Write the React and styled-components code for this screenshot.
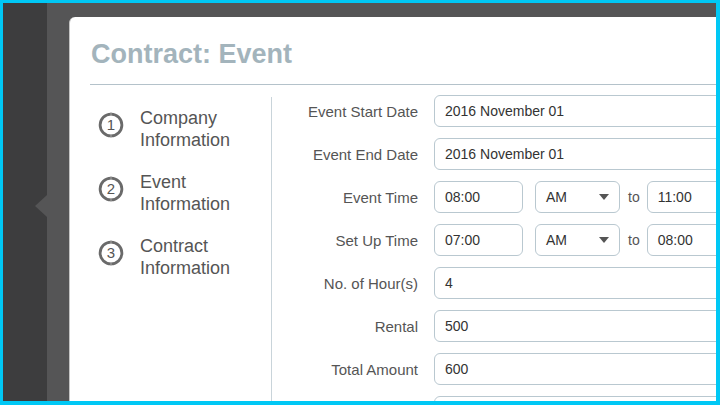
import styled, { createGlobalStyle } from "styled-components"

const GlobalStyle = createGlobalStyle`
    html, body {
        margin: 0;
        padding: 0;
        background: #00c8f5;
    }
    * { box-sizing: border-box; }
`

const steps = [
    { n: 1, lines: ["Company", "Information"] },
    { n: 2, lines: ["Event", "Information"] },
    { n: 3, lines: ["Contract", "Information"] },
]

function StepIcon({ n }){
    return(
        <svg width="26" height="26" viewBox="0 0 26 26">
            <circle cx="13" cy="13" r="10.9" fill="none" stroke="#6a6a6a" strokeWidth="2.8" />
            <line x1="13" y1="0.4" x2="13" y2="3" stroke="#9a9a9a" strokeWidth="1.2" />
            <line x1="13" y1="23" x2="13" y2="25.6" stroke="#9a9a9a" strokeWidth="1.2" />
            <text x="13" y="18.4" textAnchor="middle" fontSize="15" fontFamily="Liberation Sans, Arial, sans-serif" fill="#555">{n}</text>
        </svg>
    )
}

function Caret(){
    return(
        <svg width="10" height="6" viewBox="0 0 10 6">
            <path d="M0 0 L10 0 L5 6 Z" fill="#555" />
        </svg>
    )
}

function TimeRow({ label, from, to }){
    return(
        <Row>
            <Label>{label}</Label>
            <Field $width={89}>{from}</Field>
            <Select>AM<Caret /></Select>
            <To>to</To>
            <Field $width={120}>{to}</Field>
        </Row>
    )
}

function TextRow({ label, value }){
    return(
        <Row>
            <Label>{label}</Label>
            <Field $width={330}>{value}</Field>
        </Row>
    )
}

export default function App(){
    return(
        <Frame>
            <GlobalStyle />
            <Rail>
                <Pointer />
            </Rail>
            <Stage>
                <Card>
                    <Title>Contract: Event</Title>
                    <Divider />
                    <Body>
                        <Steps>
                            {steps.map(s => (
                                <Step key={s.n}>
                                    <StepIcon n={s.n} />
                                    <StepText>
                                        {s.lines.map(l => <div key={l}>{l}</div>)}
                                    </StepText>
                                </Step>
                            ))}
                        </Steps>
                        <Form>
                            <TextRow label="Event Start Date" value="2016 November 01" />
                            <TextRow label="Event End Date" value="2016 November 01" />
                            <TimeRow label="Event Time" from="08:00" to="11:00" />
                            <TimeRow label="Set Up Time" from="07:00" to="08:00" />
                            <TextRow label="No. of Hour(s)" value="4" />
                            <TextRow label="Rental" value="500" />
                            <TextRow label="Total Amount" value="600" />
                            <TextRow label="" value="" />
                        </Form>
                    </Body>
                </Card>
            </Stage>
        </Frame>
    )
}

const Frame = styled.div`
    width: 720px;
    height: 405px;
    border-style: solid;
    border-color: #00c8f5;
    border-width: 3px 4px 4px 3px;
    display: flex;
    overflow: hidden;
    font-family: "Liberation Sans", Arial, sans-serif;
`

const Rail = styled.div`
    width: 44px;
    flex-shrink: 0;
    background: #3d3d3e;
    position: relative;
`

const Pointer = styled.div`
    position: absolute;
    right: 0;
    top: 192px;
    width: 0;
    height: 0;
    border-top: 11px solid transparent;
    border-bottom: 11px solid transparent;
    border-right: 12px solid #555556;
`

const Stage = styled.div`
    flex: 1;
    background: #555556;
    padding: 14px 0 0 22px;
    display: flex;
    align-items: flex-start;
    overflow: hidden;
`

const Card = styled.div`
    width: 700px;
    min-height: 420px;
    flex-shrink: 0;
    background: #fff;
    border-top-left-radius: 6px;
    border-left: 1px solid #c4c4c4;
    padding: 21px 0 0 20px;
    display: flex;
    flex-direction: column;
    > * { flex-shrink: 0; }
`

const Title = styled.h1`
    margin: 0 0 0 1px;
    font-size: 27px;
    line-height: 32px;
    font-weight: 700;
    color: #a3b4bc;
`

const Divider = styled.div`
    margin-top: 14px;
    height: 1px;
    background: #b4c2ca;
`

const Body = styled.div`
    display: flex;
    margin-top: 10px;
`

const Steps = styled.div`
    width: 182px;
    flex-shrink: 0;
    border-right: 1px solid #c9d4da;
    margin-top: 2px;
    padding: 10px 0 0 8px;
    display: flex;
    flex-direction: column;
    gap: 20px;
    min-height: 320px;
`

const Step = styled.div`
    display: flex;
    align-items: flex-start;
    gap: 16px;
    svg { margin-top: 5px; flex-shrink: 0; }
`

const StepText = styled.div`
    font-size: 18px;
    line-height: 22px;
    color: #555;
`

const Form = styled.div`
    display: flex;
    flex-direction: column;
    gap: 11px;
`

const Row = styled.div`
    display: flex;
    align-items: center;
    height: 32px;
`

const Label = styled.div`
    width: 146px;
    margin-right: 16px;
    text-align: right;
    font-size: 15px;
    color: #555;
`

const Field = styled.div`
    width: ${p => p.$width}px;
    height: 32px;
    flex-shrink: 0;
    border: 1px solid #b9c8d0;
    border-radius: 6px;
    padding-left: 10px;
    display: flex;
    align-items: center;
    font-size: 14px;
    color: #333;
`

const Select = styled(Field).attrs({ $width: 85 })`
    margin-left: 12px;
    justify-content: space-between;
    padding-right: 10px;
`

const To = styled.span`
    margin: 0 7px 0 8px;
    font-size: 14px;
    color: #555;
`
